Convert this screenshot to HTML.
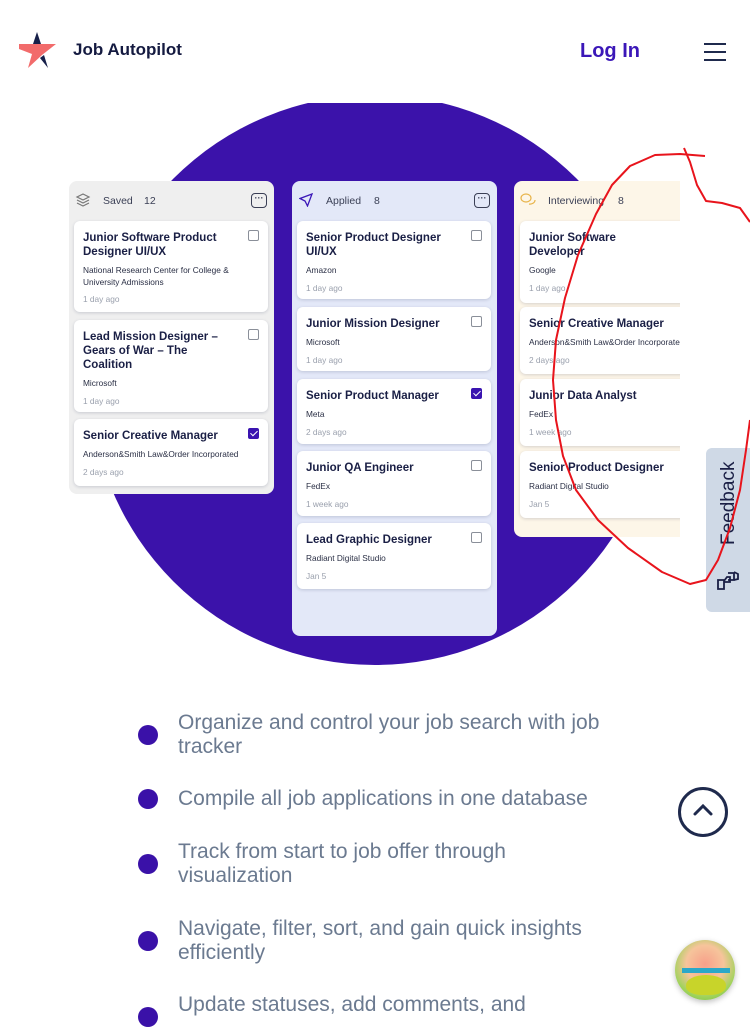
<!DOCTYPE html>
<html><head><meta charset="utf-8"><style>
*{margin:0;padding:0;box-sizing:border-box}
body{width:750px;height:1015px;overflow:hidden;background:#fff;font-family:"Liberation Sans",sans-serif;position:relative}
.abs{position:absolute}
.col{position:absolute;border-radius:8px;overflow:hidden}
.hdr{position:absolute;left:0;top:0;height:40px;width:100%;font-size:10.5px;color:#3a3f55}
.card{position:absolute;background:#fff;border-radius:6px;box-shadow:0 1px 3px rgba(30,40,80,.18);padding:10px 9px}
.t{font-size:11.5px;font-weight:bold;color:#1a1f45;line-height:14px;padding-right:20px}
.c{font-size:8.3px;color:#2a2f45;margin-top:6px;line-height:11.5px}
.d{font-size:8.3px;color:#9aa0ad;margin-top:6px}
.cb{position:absolute;right:9px;top:9px;width:11px;height:11px;border:1.2px solid #8a8f99;border-radius:2px}
.cb.on{background:#3a14b0;border-color:#3a14b0}
.cb.on:after{content:"";position:absolute;left:3px;top:0px;width:3px;height:6px;border:solid #fff;border-width:0 1.3px 1.3px 0;transform:rotate(45deg)}
.dots{position:absolute;right:7px;top:12px;width:16px;height:15px;border:1.5px solid #3a3f55;border-radius:4px;font-size:9px;line-height:8px;text-align:center;font-weight:bold;color:#3a3f55}
.li{position:absolute;left:178px;font-size:21px;line-height:24px;color:#6b7a90;width:440px}
.dot{position:absolute;left:138px;width:20px;height:20px;border-radius:50%;background:#3a11a8}
</style></head><body>
<svg class="abs" style="left:18px;top:30px" width="40" height="40" viewBox="0 0 40 40">
<polygon points="19,2 23,14 15,14" fill="#17204a"/>
<polygon points="1,14 38,14 24,25 10,38 14,24 1,19" fill="#f26b6b"/>
<polygon points="22,28 26,25 30,38" fill="#17204a"/>
</svg>
<div class="abs" style="left:73px;top:40px;font-size:17px;font-weight:bold;color:#141a40">Job Autopilot</div>
<div class="abs" style="left:580px;top:40px;font-size:20px;font-weight:bold;color:#3b17b8">Log In</div>
<div class="abs" style="left:704px;top:43px;width:22px;height:2px;background:#1f2a4d;box-shadow:0 8px 0 #1f2a4d,0 16px 0 #1f2a4d"></div>

<div class="abs" style="left:0;top:103px;width:750px;height:600px;overflow:hidden">
<div class="abs" style="left:90px;top:-8px;width:570px;height:570px;border-radius:50%;background:#3b12aa"></div>
</div>

<div class="col" style="left:69px;top:181px;width:205px;height:313px;background:#efefef">
<div class="hdr"><svg class="abs" style="left:6px;top:11px" width="16" height="16" viewBox="0 0 16 16" fill="none" stroke="#777" stroke-width="1.2"><path d="M8 2L14 5 8 8 2 5Z"/><path d="M2 8l6 3 6-3M2 11l6 3 6-3"/></svg>
<span class="abs" style="left:34px;top:14px">Saved</span><span class="abs" style="left:75px;top:14px">12</span><div class="dots">···</div></div>
<div class="card" style="left:5px;top:40px;width:194px;height:91px"><div class="t">Junior Software Product Designer UI/UX</div><div class="c">National Research Center for College &amp; University Admissions</div><div class="d">1 day ago</div><div class="cb"></div></div>
<div class="card" style="left:5px;top:139px;width:194px;height:92px"><div class="t">Lead Mission Designer – Gears of War – The Coalition</div><div class="c">Microsoft</div><div class="d">1 day ago</div><div class="cb"></div></div>
<div class="card" style="left:5px;top:238px;width:194px;height:67px"><div class="t">Senior Creative Manager</div><div class="c">Anderson&amp;Smith Law&amp;Order Incorporated</div><div class="d">2 days ago</div><div class="cb on"></div></div>
</div>

<div class="col" style="left:292px;top:181px;width:205px;height:455px;background:#e3e8f8">
<div class="hdr"><svg class="abs" style="left:7px;top:12px" width="14" height="14" viewBox="0 0 14 14" fill="none" stroke="#3b17b8" stroke-width="1.3"><path d="M13 1L1 5.5 6 8 8.5 13Z"/></svg>
<span class="abs" style="left:34px;top:14px">Applied</span><span class="abs" style="left:82px;top:14px">8</span><div class="dots">···</div></div>
<div class="card" style="left:5px;top:40px;width:194px;height:78px"><div class="t">Senior Product Designer UI/UX</div><div class="c">Amazon</div><div class="d">1 day ago</div><div class="cb"></div></div>
<div class="card" style="left:5px;top:126px;width:194px;height:64px"><div class="t">Junior Mission Designer</div><div class="c">Microsoft</div><div class="d">1 day ago</div><div class="cb"></div></div>
<div class="card" style="left:5px;top:198px;width:194px;height:65px"><div class="t">Senior Product Manager</div><div class="c">Meta</div><div class="d">2 days ago</div><div class="cb on"></div></div>
<div class="card" style="left:5px;top:270px;width:194px;height:65px"><div class="t">Junior QA Engineer</div><div class="c">FedEx</div><div class="d">1 week ago</div><div class="cb"></div></div>
<div class="card" style="left:5px;top:342px;width:194px;height:66px"><div class="t">Lead Graphic Designer</div><div class="c">Radiant Digital Studio</div><div class="d">Jan 5</div><div class="cb"></div></div>
</div>

<div class="col" style="left:514px;top:181px;width:166px;height:356px;background:#fdf6e8;border-radius:8px 0 0 8px">
<div class="hdr"><svg class="abs" style="left:6px;top:11px" width="16" height="16" viewBox="0 0 16 16" fill="none" stroke="#e8b44a" stroke-width="1.2"><ellipse cx="6" cy="6" rx="5" ry="4"/><path d="M9 12a5 4 0 0 0 6-4"/></svg>
<span class="abs" style="left:34px;top:14px">Interviewing</span><span class="abs" style="left:104px;top:14px">8</span></div>
<div class="card" style="left:6px;top:40px;width:170px;height:82px"><div class="t">Junior Software Developer</div><div class="c">Google</div><div class="d">1 day ago</div></div>
<div class="card" style="left:6px;top:126px;width:170px;height:67px"><div class="t" style="white-space:nowrap">Senior Creative Manager</div><div class="c" style="white-space:nowrap">Anderson&amp;Smith Law&amp;Order Incorporated</div><div class="d">2 days ago</div></div>
<div class="card" style="left:6px;top:198px;width:170px;height:67px"><div class="t">Junior Data Analyst</div><div class="c">FedEx</div><div class="d">1 week ago</div></div>
<div class="card" style="left:6px;top:270px;width:170px;height:67px"><div class="t" style="white-space:nowrap">Senior Product Designer</div><div class="c">Radiant Digital Studio</div><div class="d">Jan 5</div></div>
</div>

<div class="abs" style="left:706px;top:448px;width:50px;height:164px;background:#cfd9e6;border-radius:6px 0 0 6px"></div>
<div class="abs" style="left:647px;top:503px;width:164px;height:24px;transform:rotate(-90deg);font-size:19px;color:#1a1f45;line-height:24px;text-align:left;padding-left:52px">Feedback</div>
<svg class="abs" style="left:716px;top:570px" width="24" height="22" viewBox="0 0 24 22" fill="none" stroke="#1a1f45" stroke-width="1.8"><path d="M2 10h6v9H2zM8 11l3-4h3v5h-6"/><path d="M12 3h6v7h-6M18 2l4 2v5l-4 1"/></svg>

<svg class="abs" style="left:0;top:0" width="750" height="1015" fill="none" stroke="#e8141c" stroke-width="2" stroke-linejoin="round">
<path d="M705 156L680 154 655 155 630 166 612 185 596 214 578 255 565 298 556 340 553 380 556 420 563 456 576 490 598 520 628 548 662 572 690 584 706 580 718 560 730 528 740 490 746 450 750 420"/>
<path d="M684 148L690 162 697 185 706 201 722 203 740 208 750 222"/>
</svg>

<div class="dot" style="top:725px"></div><div class="li" style="top:711px">Organize and control your job search with job tracker</div>
<div class="dot" style="top:789px"></div><div class="li" style="top:787px">Compile all job applications in one database</div>
<div class="dot" style="top:854px"></div><div class="li" style="top:840px">Track from start to job offer through visualization</div>
<div class="dot" style="top:931px"></div><div class="li" style="top:917px">Navigate, filter, sort, and gain quick insights efficiently</div>
<div class="dot" style="top:1007px"></div><div class="li" style="top:993px">Update statuses, add comments, and</div>

<div class="abs" style="left:678px;top:787px;width:50px;height:50px;border:3px solid #1f2a4d;border-radius:50%"></div>
<svg class="abs" style="left:692px;top:802px" width="22" height="16" viewBox="0 0 22 16" fill="none" stroke="#1f2a4d" stroke-width="3" stroke-linecap="round"><path d="M3 12L11 4 19 12"/></svg>

<div class="abs" style="left:675px;top:940px;width:60px;height:60px;border-radius:50%;background:radial-gradient(circle at 50% 40%,#f7a08a 0,#f6c49b 40%,#9fd35a 70%,#6ab04a 100%);box-shadow:0 2px 6px rgba(0,0,0,.25)"></div>
<div class="abs" style="left:686px;top:975px;width:40px;height:20px;border-radius:50% 50% 40% 40%;background:#c8d42a"></div>
<div class="abs" style="left:682px;top:968px;width:48px;height:5px;background:#2aa8c8"></div>
</body></html>
